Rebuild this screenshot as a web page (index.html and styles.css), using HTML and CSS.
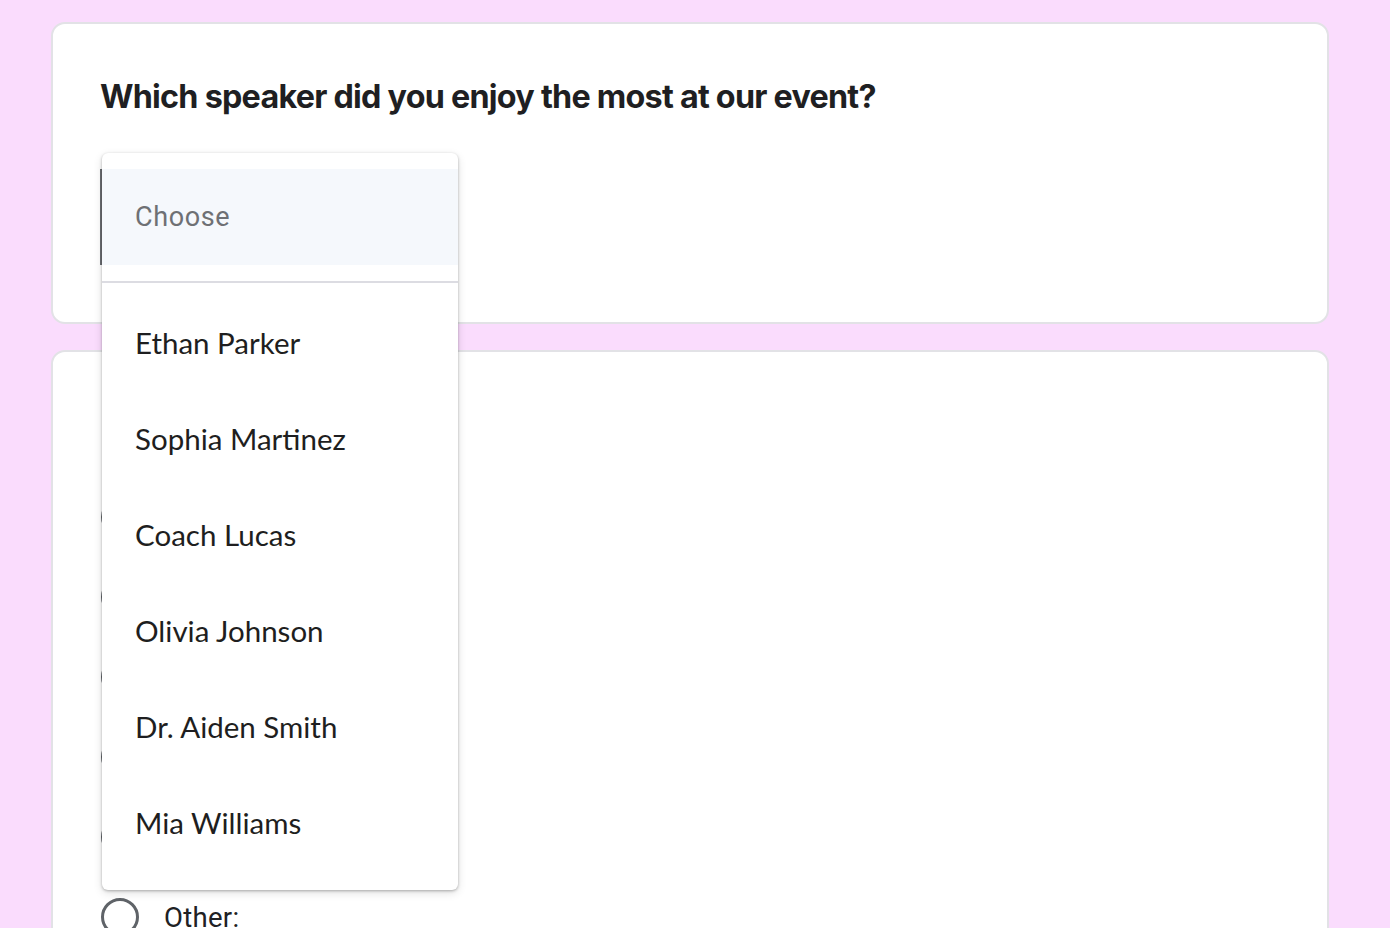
FILE: index.html
```html
<!DOCTYPE html>
<html lang="en">
<head>
    <meta charset="UTF-8">
    <meta name="viewport" content="width=device-width, initial-scale=1.0">
    <title>Event Feedback</title>
    <link rel="stylesheet" href="styles.css">
</head>
<body>
    <div class="form">
        <div class="card card-question">
            <h2 class="question">Which speaker did you enjoy the most at our event?</h2>
            <div class="select-field">
                <div class="select-box"></div>
                <div class="menu">
                    <div class="menu-placeholder">Choose</div>
                    <div class="menu-divider"></div>
                    <div class="menu-item">Ethan Parker</div>
                    <div class="menu-item">Sophia Martinez</div>
                    <div class="menu-item">Coach Lucas</div>
                    <div class="menu-item">Olivia Johnson</div>
                    <div class="menu-item">Dr. Aiden Smith</div>
                    <div class="menu-item">Mia Williams</div>
                </div>
            </div>
        </div>

        <div class="card card-options">
            <div class="sub-title"></div>
            <div class="option"><span class="radio"></span></div>
            <div class="option"><span class="radio"></span></div>
            <div class="option"><span class="radio"></span></div>
            <div class="option"><span class="radio"></span></div>
            <div class="option"><span class="radio"></span></div>
            <div class="option"><span class="radio"></span><span class="option-label">Other:</span></div>
        </div>
    </div>
</body>
</html>
```

FILE: styles.css
```css
body {
    margin: 0;
    background: #fadcfd;
    font-family: Roboto, "Liberation Sans", sans-serif;
    color: #202124;
}
.form {
    width: 1278px;
    padding: 22px 0 0 51px;
    display: flex;
    flex-direction: column;
    gap: 26px;
}
.card {
    background: #fff;
    border: 2px solid #e2e2e6;
    border-radius: 14px;
    box-sizing: border-box;
}
.card-question {
    position: relative;
    height: 302px;
    padding: 51px 47px 0;
}
.question {
    margin: 0;
    font-family: Inter, sans-serif;
    font-weight: 700;
    font-size: 32.3px;
    letter-spacing: -0.75px;
    line-height: 44px;
    color: #1f1f22;
}
.select-field {
    position: relative;
    margin-top: 50px;
    height: 96px;
}
.select-box {
    width: 300px;
    height: 96px;
    border-left: 2px solid #6b6e72;
}
.menu {
    position: absolute;
    top: -16px;
    left: 2px;
    width: 356px;
    background: #fff;
    border-radius: 6px;
    box-shadow: 0 1px 3px rgba(0,0,0,0.28), 0 3px 10px rgba(0,0,0,0.12);
    padding: 16px 0 20px;
    z-index: 2;
}
.menu-placeholder {
    height: 96px;
    display: flex;
    align-items: center;
    padding-left: 33px;
    background: #f5f8fc;
    color: #6e7074;
    font-size: 27px;
    letter-spacing: 0.6px;
}
.menu-divider {
    margin-top: 16px;
    margin-bottom: 11px;
    border-top: 2px solid #dcdce2;
}
.menu-item {
    height: 96px;
    display: flex;
    align-items: center;
    padding-left: 33px;
    font-family: Lato, sans-serif;
    font-size: 29.5px;
    color: #1e1e20;
}
.card-options {
    height: 620px;
    padding: 37px 48px 0;
}
.sub-title {
    height: 88px;
}
.option {
    height: 80px;
    display: flex;
    align-items: center;
    gap: 25px;
}
.radio {
    width: 38px;
    height: 38px;
    border: 3px solid #5f6368;
    border-radius: 50%;
    box-sizing: border-box;
    flex: none;
}
.option-label {
    font-size: 27.5px;
    letter-spacing: 0.3px;
}
```
